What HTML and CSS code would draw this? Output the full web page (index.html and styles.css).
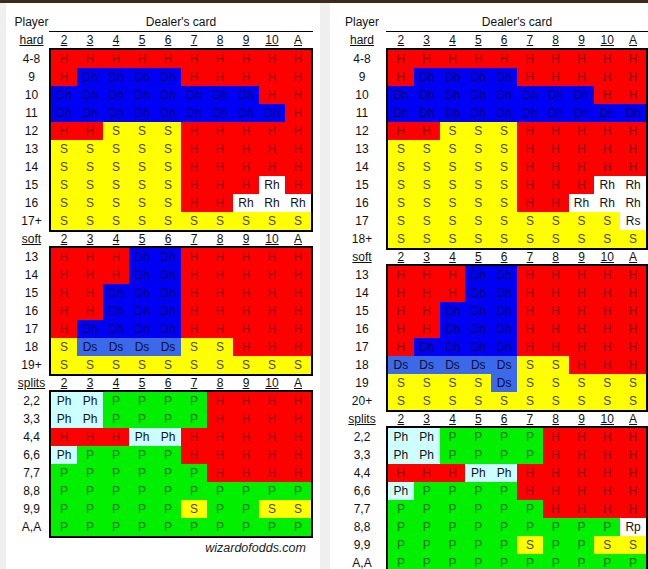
FILE: index.html
```html
<!DOCTYPE html>
<html>
<head>
<meta charset="utf-8">
<link rel="stylesheet" href="styles.css">
</head>
<body>
<div class="topbar"></div>
<div class="page">
  <div class="panel left">
    <div class="hdr top"><div class="lbl">Player</div><div class="dealer">Dealer's card</div></div>
    <div class="hdr first"><div class="lbl u">hard</div><div class="cols"><span>2</span><span>3</span><span>4</span><span>5</span><span>6</span><span>7</span><span>8</span><span>9</span><span>10</span><span>A</span></div></div>
    <div class="block">
      <div class="labels"><div>4-8</div><div>9</div><div>10</div><div>11</div><div>12</div><div>13</div><div>14</div><div>15</div><div>16</div><div>17+</div></div>
      <div class="sec">
        <div class="row"><span class="h">H</span><span class="h">H</span><span class="h">H</span><span class="h">H</span><span class="h">H</span><span class="h">H</span><span class="h">H</span><span class="h">H</span><span class="h">H</span><span class="h">H</span></div>
        <div class="row"><span class="h">H</span><span class="d">Dh</span><span class="d">Dh</span><span class="d">Dh</span><span class="d">Dh</span><span class="h">H</span><span class="h">H</span><span class="h">H</span><span class="h">H</span><span class="h">H</span></div>
        <div class="row"><span class="d">Dh</span><span class="d">Dh</span><span class="d">Dh</span><span class="d">Dh</span><span class="d">Dh</span><span class="d">Dh</span><span class="d">Dh</span><span class="d">Dh</span><span class="h">H</span><span class="h">H</span></div>
        <div class="row"><span class="d">Dh</span><span class="d">Dh</span><span class="d">Dh</span><span class="d">Dh</span><span class="d">Dh</span><span class="d">Dh</span><span class="d">Dh</span><span class="d">Dh</span><span class="d">Dh</span><span class="h">H</span></div>
        <div class="row"><span class="h">H</span><span class="h">H</span><span class="s">S</span><span class="s">S</span><span class="s">S</span><span class="h">H</span><span class="h">H</span><span class="h">H</span><span class="h">H</span><span class="h">H</span></div>
        <div class="row"><span class="s">S</span><span class="s">S</span><span class="s">S</span><span class="s">S</span><span class="s">S</span><span class="h">H</span><span class="h">H</span><span class="h">H</span><span class="h">H</span><span class="h">H</span></div>
        <div class="row"><span class="s">S</span><span class="s">S</span><span class="s">S</span><span class="s">S</span><span class="s">S</span><span class="h">H</span><span class="h">H</span><span class="h">H</span><span class="h">H</span><span class="h">H</span></div>
        <div class="row"><span class="s">S</span><span class="s">S</span><span class="s">S</span><span class="s">S</span><span class="s">S</span><span class="h">H</span><span class="h">H</span><span class="h">H</span><span class="r">Rh</span><span class="h">H</span></div>
        <div class="row"><span class="s">S</span><span class="s">S</span><span class="s">S</span><span class="s">S</span><span class="s">S</span><span class="h">H</span><span class="h">H</span><span class="r">Rh</span><span class="r">Rh</span><span class="r">Rh</span></div>
        <div class="row"><span class="s">S</span><span class="s">S</span><span class="s">S</span><span class="s">S</span><span class="s">S</span><span class="s">S</span><span class="s">S</span><span class="s">S</span><span class="s">S</span><span class="s">S</span></div>
      </div>
    </div>
    <div class="hdr mid"><div class="lbl u">soft</div><div class="cols"><span>2</span><span>3</span><span>4</span><span>5</span><span>6</span><span>7</span><span>8</span><span>9</span><span>10</span><span>A</span></div></div>
    <div class="block">
      <div class="labels"><div>13</div><div>14</div><div>15</div><div>16</div><div>17</div><div>18</div><div>19+</div></div>
      <div class="sec">
        <div class="row"><span class="h">H</span><span class="h">H</span><span class="h">H</span><span class="d">Dh</span><span class="d">Dh</span><span class="h">H</span><span class="h">H</span><span class="h">H</span><span class="h">H</span><span class="h">H</span></div>
        <div class="row"><span class="h">H</span><span class="h">H</span><span class="h">H</span><span class="d">Dh</span><span class="d">Dh</span><span class="h">H</span><span class="h">H</span><span class="h">H</span><span class="h">H</span><span class="h">H</span></div>
        <div class="row"><span class="h">H</span><span class="h">H</span><span class="d">Dh</span><span class="d">Dh</span><span class="d">Dh</span><span class="h">H</span><span class="h">H</span><span class="h">H</span><span class="h">H</span><span class="h">H</span></div>
        <div class="row"><span class="h">H</span><span class="h">H</span><span class="d">Dh</span><span class="d">Dh</span><span class="d">Dh</span><span class="h">H</span><span class="h">H</span><span class="h">H</span><span class="h">H</span><span class="h">H</span></div>
        <div class="row"><span class="h">H</span><span class="d">Dh</span><span class="d">Dh</span><span class="d">Dh</span><span class="d">Dh</span><span class="h">H</span><span class="h">H</span><span class="h">H</span><span class="h">H</span><span class="h">H</span></div>
        <div class="row"><span class="s">S</span><span class="ds">Ds</span><span class="ds">Ds</span><span class="ds">Ds</span><span class="ds">Ds</span><span class="s">S</span><span class="s">S</span><span class="h">H</span><span class="h">H</span><span class="h">H</span></div>
        <div class="row"><span class="s">S</span><span class="s">S</span><span class="s">S</span><span class="s">S</span><span class="s">S</span><span class="s">S</span><span class="s">S</span><span class="s">S</span><span class="s">S</span><span class="s">S</span></div>
      </div>
    </div>
    <div class="hdr mid"><div class="lbl u">splits</div><div class="cols"><span>2</span><span>3</span><span>4</span><span>5</span><span>6</span><span>7</span><span>8</span><span>9</span><span>10</span><span>A</span></div></div>
    <div class="block">
      <div class="labels"><div>2,2</div><div>3,3</div><div>4,4</div><div>6,6</div><div>7,7</div><div>8,8</div><div>9,9</div><div>A,A</div></div>
      <div class="sec">
        <div class="row"><span class="ph">Ph</span><span class="ph">Ph</span><span class="p">P</span><span class="p">P</span><span class="p">P</span><span class="p">P</span><span class="h">H</span><span class="h">H</span><span class="h">H</span><span class="h">H</span></div>
        <div class="row"><span class="ph">Ph</span><span class="ph">Ph</span><span class="p">P</span><span class="p">P</span><span class="p">P</span><span class="p">P</span><span class="h">H</span><span class="h">H</span><span class="h">H</span><span class="h">H</span></div>
        <div class="row"><span class="h">H</span><span class="h">H</span><span class="h">H</span><span class="ph">Ph</span><span class="ph">Ph</span><span class="h">H</span><span class="h">H</span><span class="h">H</span><span class="h">H</span><span class="h">H</span></div>
        <div class="row"><span class="ph">Ph</span><span class="p">P</span><span class="p">P</span><span class="p">P</span><span class="p">P</span><span class="h">H</span><span class="h">H</span><span class="h">H</span><span class="h">H</span><span class="h">H</span></div>
        <div class="row"><span class="p">P</span><span class="p">P</span><span class="p">P</span><span class="p">P</span><span class="p">P</span><span class="p">P</span><span class="h">H</span><span class="h">H</span><span class="h">H</span><span class="h">H</span></div>
        <div class="row"><span class="p">P</span><span class="p">P</span><span class="p">P</span><span class="p">P</span><span class="p">P</span><span class="p">P</span><span class="p">P</span><span class="p">P</span><span class="p">P</span><span class="p">P</span></div>
        <div class="row"><span class="p">P</span><span class="p">P</span><span class="p">P</span><span class="p">P</span><span class="p">P</span><span class="s">S</span><span class="p">P</span><span class="p">P</span><span class="s">S</span><span class="s">S</span></div>
        <div class="row"><span class="p">P</span><span class="p">P</span><span class="p">P</span><span class="p">P</span><span class="p">P</span><span class="p">P</span><span class="p">P</span><span class="p">P</span><span class="p">P</span><span class="p">P</span></div>
      </div>
    </div>
    <div class="credit">wizardofodds.com</div>
  </div>

  <div class="panel right">
    <div class="hdr top"><div class="lbl">Player</div><div class="dealer">Dealer's card</div></div>
    <div class="hdr first"><div class="lbl u">hard</div><div class="cols"><span>2</span><span>3</span><span>4</span><span>5</span><span>6</span><span>7</span><span>8</span><span>9</span><span>10</span><span>A</span></div></div>
    <div class="block">
      <div class="labels"><div>4-8</div><div>9</div><div>10</div><div>11</div><div>12</div><div>13</div><div>14</div><div>15</div><div>16</div><div>17</div><div>18+</div></div>
      <div class="sec">
        <div class="row"><span class="h">H</span><span class="h">H</span><span class="h">H</span><span class="h">H</span><span class="h">H</span><span class="h">H</span><span class="h">H</span><span class="h">H</span><span class="h">H</span><span class="h">H</span></div>
        <div class="row"><span class="h">H</span><span class="d">Dh</span><span class="d">Dh</span><span class="d">Dh</span><span class="d">Dh</span><span class="h">H</span><span class="h">H</span><span class="h">H</span><span class="h">H</span><span class="h">H</span></div>
        <div class="row"><span class="d">Dh</span><span class="d">Dh</span><span class="d">Dh</span><span class="d">Dh</span><span class="d">Dh</span><span class="d">Dh</span><span class="d">Dh</span><span class="d">Dh</span><span class="h">H</span><span class="h">H</span></div>
        <div class="row"><span class="d">Dh</span><span class="d">Dh</span><span class="d">Dh</span><span class="d">Dh</span><span class="d">Dh</span><span class="d">Dh</span><span class="d">Dh</span><span class="d">Dh</span><span class="d">Dh</span><span class="d">Dh</span></div>
        <div class="row"><span class="h">H</span><span class="h">H</span><span class="s">S</span><span class="s">S</span><span class="s">S</span><span class="h">H</span><span class="h">H</span><span class="h">H</span><span class="h">H</span><span class="h">H</span></div>
        <div class="row"><span class="s">S</span><span class="s">S</span><span class="s">S</span><span class="s">S</span><span class="s">S</span><span class="h">H</span><span class="h">H</span><span class="h">H</span><span class="h">H</span><span class="h">H</span></div>
        <div class="row"><span class="s">S</span><span class="s">S</span><span class="s">S</span><span class="s">S</span><span class="s">S</span><span class="h">H</span><span class="h">H</span><span class="h">H</span><span class="h">H</span><span class="h">H</span></div>
        <div class="row"><span class="s">S</span><span class="s">S</span><span class="s">S</span><span class="s">S</span><span class="s">S</span><span class="h">H</span><span class="h">H</span><span class="h">H</span><span class="r">Rh</span><span class="r">Rh</span></div>
        <div class="row"><span class="s">S</span><span class="s">S</span><span class="s">S</span><span class="s">S</span><span class="s">S</span><span class="h">H</span><span class="h">H</span><span class="r">Rh</span><span class="r">Rh</span><span class="r">Rh</span></div>
        <div class="row"><span class="s">S</span><span class="s">S</span><span class="s">S</span><span class="s">S</span><span class="s">S</span><span class="s">S</span><span class="s">S</span><span class="s">S</span><span class="s">S</span><span class="r">Rs</span></div>
        <div class="row"><span class="s">S</span><span class="s">S</span><span class="s">S</span><span class="s">S</span><span class="s">S</span><span class="s">S</span><span class="s">S</span><span class="s">S</span><span class="s">S</span><span class="s">S</span></div>
      </div>
    </div>
    <div class="hdr mid"><div class="lbl u">soft</div><div class="cols"><span>2</span><span>3</span><span>4</span><span>5</span><span>6</span><span>7</span><span>8</span><span>9</span><span>10</span><span>A</span></div></div>
    <div class="block">
      <div class="labels"><div>13</div><div>14</div><div>15</div><div>16</div><div>17</div><div>18</div><div>19</div><div>20+</div></div>
      <div class="sec">
        <div class="row"><span class="h">H</span><span class="h">H</span><span class="h">H</span><span class="d">Dh</span><span class="d">Dh</span><span class="h">H</span><span class="h">H</span><span class="h">H</span><span class="h">H</span><span class="h">H</span></div>
        <div class="row"><span class="h">H</span><span class="h">H</span><span class="h">H</span><span class="d">Dh</span><span class="d">Dh</span><span class="h">H</span><span class="h">H</span><span class="h">H</span><span class="h">H</span><span class="h">H</span></div>
        <div class="row"><span class="h">H</span><span class="h">H</span><span class="d">Dh</span><span class="d">Dh</span><span class="d">Dh</span><span class="h">H</span><span class="h">H</span><span class="h">H</span><span class="h">H</span><span class="h">H</span></div>
        <div class="row"><span class="h">H</span><span class="h">H</span><span class="d">Dh</span><span class="d">Dh</span><span class="d">Dh</span><span class="h">H</span><span class="h">H</span><span class="h">H</span><span class="h">H</span><span class="h">H</span></div>
        <div class="row"><span class="h">H</span><span class="d">Dh</span><span class="d">Dh</span><span class="d">Dh</span><span class="d">Dh</span><span class="h">H</span><span class="h">H</span><span class="h">H</span><span class="h">H</span><span class="h">H</span></div>
        <div class="row"><span class="ds">Ds</span><span class="ds">Ds</span><span class="ds">Ds</span><span class="ds">Ds</span><span class="ds">Ds</span><span class="s">S</span><span class="s">S</span><span class="h">H</span><span class="h">H</span><span class="h">H</span></div>
        <div class="row"><span class="s">S</span><span class="s">S</span><span class="s">S</span><span class="s">S</span><span class="ds">Ds</span><span class="s">S</span><span class="s">S</span><span class="s">S</span><span class="s">S</span><span class="s">S</span></div>
        <div class="row"><span class="s">S</span><span class="s">S</span><span class="s">S</span><span class="s">S</span><span class="s">S</span><span class="s">S</span><span class="s">S</span><span class="s">S</span><span class="s">S</span><span class="s">S</span></div>
      </div>
    </div>
    <div class="hdr mid"><div class="lbl u">splits</div><div class="cols"><span>2</span><span>3</span><span>4</span><span>5</span><span>6</span><span>7</span><span>8</span><span>9</span><span>10</span><span>A</span></div></div>
    <div class="block">
      <div class="labels"><div>2,2</div><div>3,3</div><div>4,4</div><div>6,6</div><div>7,7</div><div>8,8</div><div>9,9</div><div>A,A</div></div>
      <div class="sec">
        <div class="row"><span class="ph">Ph</span><span class="ph">Ph</span><span class="p">P</span><span class="p">P</span><span class="p">P</span><span class="p">P</span><span class="h">H</span><span class="h">H</span><span class="h">H</span><span class="h">H</span></div>
        <div class="row"><span class="ph">Ph</span><span class="ph">Ph</span><span class="p">P</span><span class="p">P</span><span class="p">P</span><span class="p">P</span><span class="h">H</span><span class="h">H</span><span class="h">H</span><span class="h">H</span></div>
        <div class="row"><span class="h">H</span><span class="h">H</span><span class="h">H</span><span class="ph">Ph</span><span class="ph">Ph</span><span class="h">H</span><span class="h">H</span><span class="h">H</span><span class="h">H</span><span class="h">H</span></div>
        <div class="row"><span class="ph">Ph</span><span class="p">P</span><span class="p">P</span><span class="p">P</span><span class="p">P</span><span class="h">H</span><span class="h">H</span><span class="h">H</span><span class="h">H</span><span class="h">H</span></div>
        <div class="row"><span class="p">P</span><span class="p">P</span><span class="p">P</span><span class="p">P</span><span class="p">P</span><span class="p">P</span><span class="h">H</span><span class="h">H</span><span class="h">H</span><span class="h">H</span></div>
        <div class="row"><span class="p">P</span><span class="p">P</span><span class="p">P</span><span class="p">P</span><span class="p">P</span><span class="p">P</span><span class="p">P</span><span class="p">P</span><span class="p">P</span><span class="r">Rp</span></div>
        <div class="row"><span class="p">P</span><span class="p">P</span><span class="p">P</span><span class="p">P</span><span class="p">P</span><span class="s">S</span><span class="p">P</span><span class="p">P</span><span class="s">S</span><span class="s">S</span></div>
        <div class="row"><span class="p">P</span><span class="p">P</span><span class="p">P</span><span class="p">P</span><span class="p">P</span><span class="p">P</span><span class="p">P</span><span class="p">P</span><span class="p">P</span><span class="p">P</span></div>
      </div>
    </div>
  </div>
</div>
</body>
</html>
```
FILE: styles.css
```css
* { box-sizing: border-box; }
html, body { margin: 0; padding: 0; }
body {
  width: 648px;
  height: 569px;
  overflow: hidden;
  background: #efefef;
  font-family: "Liberation Sans", Arial, sans-serif;
  font-size: 12px;
  color: #111;
}
.topbar { height: 3px; background: #3b2a20; }
.page { display: flex; gap: 10px; padding-left: 6px; }
.panel { background: #fff; padding-top: 11px; height: 566px; }
.left { width: 314px; padding-left: 8px; }
.right { flex: 1; padding-left: 8px; }

.hdr { display: flex; }
.lbl { width: 35px; text-align: center; }
.right .lbl { width: 48px; }
.labels { width: 35px; padding-top: 2px; }
.right .labels { width: 48px; }
.labels div { height: 18px; line-height: 18px; text-align: center; }

.top { height: 18px; line-height: 17px; }
.dealer {
  width: 264px;
  height: 18px;
  text-align: center;
  border-bottom: 1px solid #000;
}
.right .dealer { width: 262px; }

.first { height: 16px; line-height: 16px; }
.mid { height: 14px; line-height: 14px; }

.u { text-decoration: underline; }
.cols {
  width: 264px;
  padding: 0 2px;
  display: grid;
  grid-template-columns: repeat(10, 1fr);
  text-align: center;
}
.right .cols { width: 262px; }
.cols span { text-decoration: underline; }

.block { display: flex; }
.sec { width: 264px; border: 2px solid #000; }
.right .sec { width: 262px; }
.row {
  display: grid;
  grid-template-columns: repeat(10, 1fr);
  height: 18px;
  line-height: 18px;
  text-align: center;
}
.row span { display: block; }

.h { background: #ff0000; color: #9a0000; }
.d { background: #0000f6; color: #00007a; }
.s { background: #ffff00; color: #4a4a10; }
.p { background: #00f000; color: #007000; }
.ph { background: #ccffff; color: #111; }
.r { background: #ffffff; color: #111; }
.ds { background: #3a6aea; color: #0a0a40; }

.credit {
  width: 292px;
  text-align: right;
  font-style: italic;
  font-size: 12.5px;
  line-height: 16px;
  padding-top: 2px;
  color: #222;
}
```
